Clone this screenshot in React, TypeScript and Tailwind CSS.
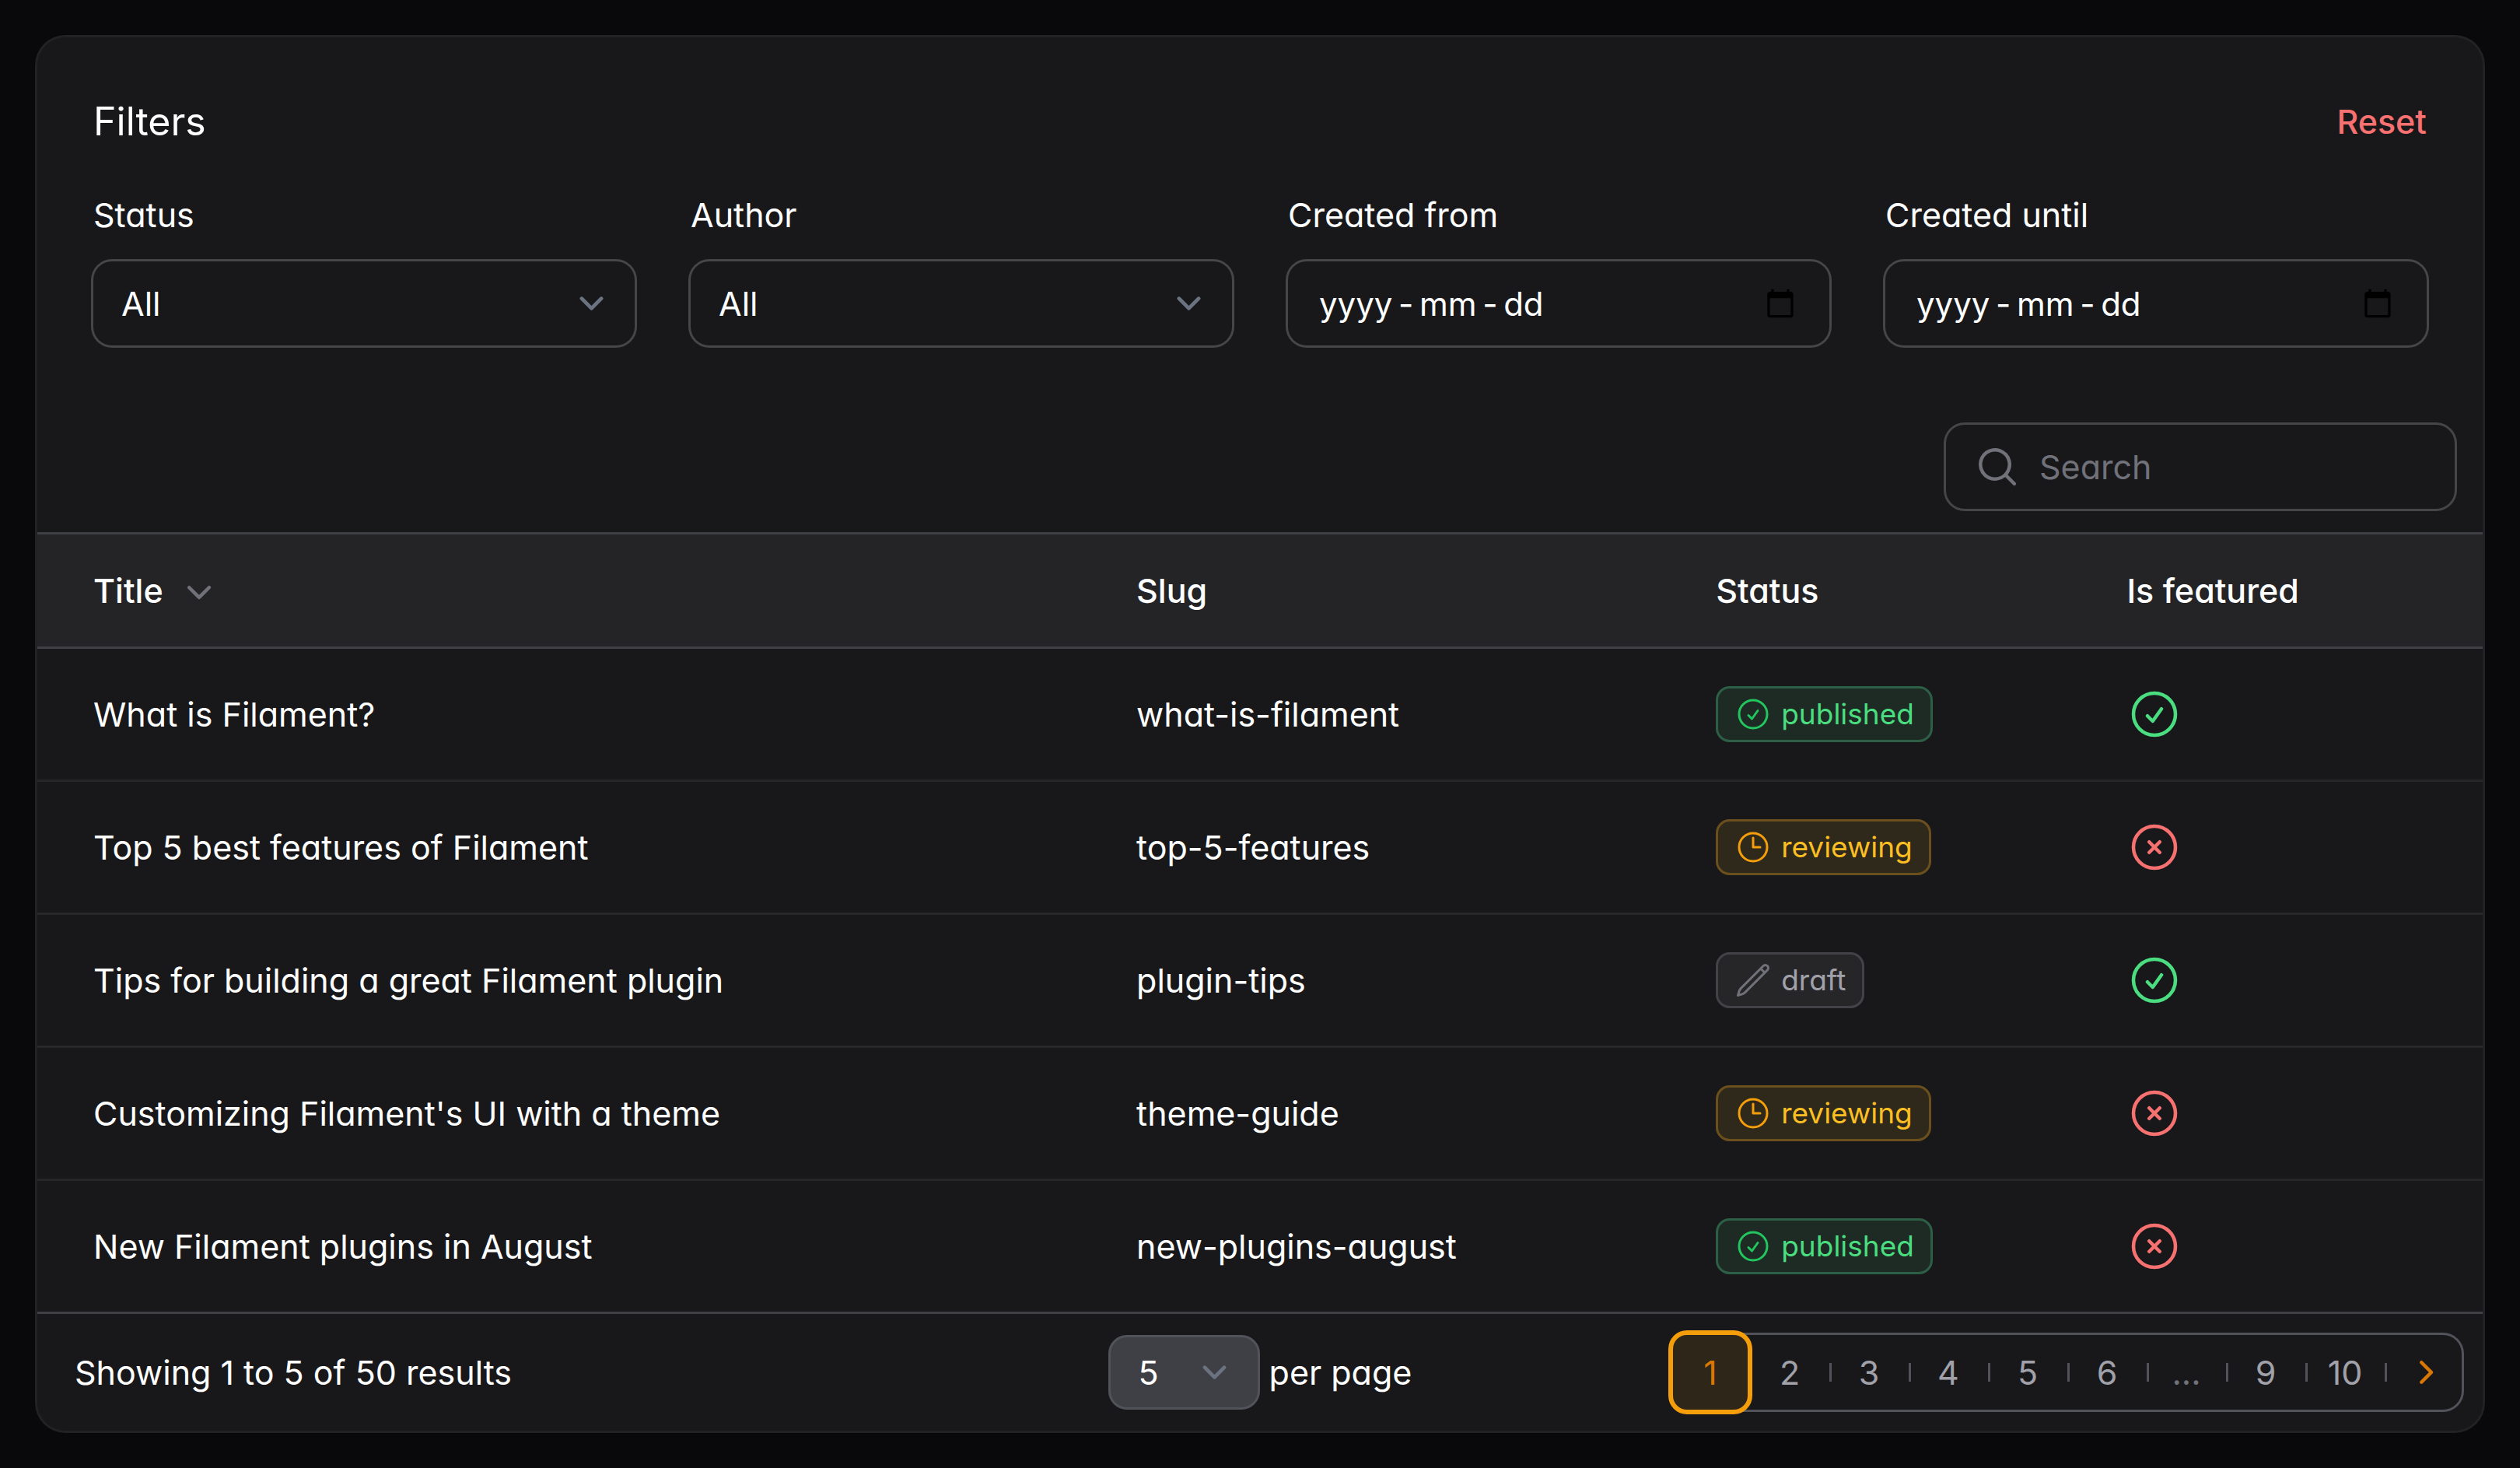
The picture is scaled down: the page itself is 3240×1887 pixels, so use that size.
import {
  HiMiniChevronDown,
  HiMiniChevronRight,
  HiMiniMagnifyingGlass,
  HiOutlineCheckCircle,
  HiOutlineClock,
  HiOutlinePencil,
  HiOutlineXCircle,
} from "react-icons/hi2";
import type { ReactNode } from "react";

type Status = "published" | "reviewing" | "draft";

const posts: { title: string; slug: string; status: Status; featured: boolean }[] = [
  { title: "What is Filament?", slug: "what-is-filament", status: "published", featured: true },
  { title: "Top 5 best features of Filament", slug: "top-5-features", status: "reviewing", featured: false },
  { title: "Tips for building a great Filament plugin", slug: "plugin-tips", status: "draft", featured: true },
  { title: "Customizing Filament's UI with a theme", slug: "theme-guide", status: "reviewing", featured: false },
  { title: "New Filament plugins in August", slug: "new-plugins-august", status: "published", featured: false },
];

const badgeStyles: Record<Status, { box: string; icon: string; Icon: typeof HiOutlineClock }> = {
  published: {
    box: "bg-[#1e2a24] text-[#4ade80] ring-[#2d5f47]",
    icon: "text-[#22c55e]",
    Icon: HiOutlineCheckCircle,
  },
  reviewing: {
    box: "bg-[#2f291b] text-[#fbbf24] ring-[#6b4f1d]",
    icon: "text-[#f59e0b]",
    Icon: HiOutlineClock,
  },
  draft: {
    box: "bg-[#262629] text-[#a1a1aa] ring-[#434347]",
    icon: "text-[#71717a]",
    Icon: HiOutlinePencil,
  },
};

function SelectChevron() {
  return (
    <svg
      viewBox="0 0 20 20"
      fill="none"
      aria-hidden="true"
      className="pointer-events-none absolute right-6 top-1/2 size-[63px] -translate-y-1/2 stroke-[#6b7280]"
    >
      <path d="M6 8l4 4 4-4" strokeWidth="1.5" strokeLinecap="round" strokeLinejoin="round" />
    </svg>
  );
}

function CalendarIcon() {
  return (
    <svg viewBox="0 0 24 24" fill="currentColor" aria-hidden="true" className="size-10">
      <path d="M20 3h-1V1h-2v2H7V1H5v2H4c-1.1 0-2 .9-2 2v16c0 1.1.9 2 2 2h16c1.1 0 2-.9 2-2V5c0-1.1-.9-2-2-2zm0 18H4V8h16v13z" />
    </svg>
  );
}

function Field({ id, label, children }: { id: string; label: string; children: ReactNode }) {
  return (
    <div className="flex min-w-0 flex-col gap-6">
      <label htmlFor={id} className="leading-[72px]">
        {label}
      </label>
      <div className="relative flex h-[108px] items-center rounded-[24px] ring-[3px] ring-[#464649]">{children}</div>
    </div>
  );
}

function SelectField({ id, label }: { id: string; label: string }) {
  return (
    <Field id={id} label={label}>
      <select id={id} className="size-full appearance-none bg-transparent pl-9 pr-24 outline-none">
        <option>All</option>
      </select>
      <SelectChevron />
    </Field>
  );
}

function DateField({ id, label }: { id: string; label: string }) {
  return (
    <Field id={id} label={label}>
      <input
        id={id}
        type="text"
        placeholder={"yyyy\u2009-\u2009mm\u2009-\u2009dd"}
        className="h-full min-w-0 flex-1 bg-transparent pl-10 text-[42px] outline-none placeholder:text-white"
      />
      <button type="button" aria-label={`Open calendar for ${label}`} className="mr-[43px] text-black">
        <CalendarIcon />
      </button>
    </Field>
  );
}

function Badge({ status }: { status: Status }) {
  const { box, icon, Icon } = badgeStyles[status];
  return (
    <span className={`inline-flex items-center gap-3 rounded-[18px] px-6 py-3 align-middle text-[37px] leading-[48px] ring-[3px] ring-inset ${box}`}>
      <Icon className={`size-12 ${icon}`} />
      {status}
    </span>
  );
}

function Pagination() {
  const pages = ["2", "3", "4", "5", "6", "…", "9", "10"];
  return (
    <nav aria-label="Pagination" className="justify-self-end">
      <ul className="flex items-center gap-[3px] rounded-[24px] text-[#a1a1aa] ring-[3px] ring-[#52525b]">
        <li>
          <button
            type="button"
            aria-current="page"
            className="block size-24 rounded-[18px] bg-[#2f261a] text-[#d97706] ring-[6px] ring-[#f59e0b]"
          >
            1
          </button>
        </li>
        {pages.map((page, i) => (
          <li key={page} className="flex items-center">
            <span className={`h-6 w-[3px] ${i === 0 ? "" : "bg-[#52525b]"}`} />
            <button type="button" disabled={page === "…"} className="size-24 disabled:text-[#71717a]">
              {page === "…" ? "..." : page}
            </button>
          </li>
        ))}
        <li className="flex items-center">
          <span className="h-6 w-[3px] bg-[#52525b]" />
          <button type="button" aria-label="Next page" className="flex size-24 items-center justify-center text-[#d97706]">
            <HiMiniChevronRight className="size-[60px]" />
          </button>
        </li>
      </ul>
    </nav>
  );
}

export default function App() {
  return (
    <div className="min-h-screen bg-[#09090b] p-12 font-['Inter',sans-serif] text-[43px] leading-[60px] text-white [font-feature-settings:'cv11']">
      <main className="overflow-hidden rounded-[36px] bg-[#18181b] shadow-sm ring-[3px] ring-[#222225]">
        <section className="p-[72px]">
          <div className="flex items-center justify-between">
            <h2 className="text-[50px] leading-[72px]">Filters</h2>
            <button type="button" className="font-medium text-[#f87171]">
              Reset
            </button>
          </div>
          <div className="mt-12 grid grid-cols-4 gap-[72px]">
            <SelectField id="filter-status" label="Status" />
            <SelectField id="filter-author" label="Author" />
            <DateField id="filter-from" label="Created from" />
            <DateField id="filter-until" label="Created until" />
          </div>
        </section>

        <div className="flex justify-end px-9 py-[30px]">
          <label className="flex h-[108px] w-[654px] items-center gap-6 rounded-[24px] px-9 ring-[3px] ring-[#464649]">
            <HiMiniMagnifyingGlass className="size-[60px] shrink-0 text-[#71717a]" />
            <input
              type="search"
              aria-label="Search"
              placeholder="Search"
              className="h-full min-w-0 flex-1 bg-transparent outline-none placeholder:text-[#71717a]"
            />
          </label>
        </div>

        <table className="w-full table-fixed border-collapse text-left">
          <thead>
            <tr className="h-[147px] border-y-[3px] border-[#3f3f46] bg-[#242427]">
              <th scope="col" className="w-[43.8%] py-0 pl-[72px] font-medium">
                <button type="button" className="flex items-center gap-4">
                  Title
                  <HiMiniChevronDown className="size-[60px] text-[#71717a]" />
                </button>
              </th>
              <th scope="col" className="w-[23.7%] px-9 font-medium">Slug</th>
              <th scope="col" className="w-[16.8%] px-9 font-medium">Status</th>
              <th scope="col" className="px-9 font-medium">Is featured</th>
            </tr>
          </thead>
          <tbody>
            {posts.map((post) => (
              <tr key={post.slug} className="h-[171px] border-b-[3px] border-[#27272a] last:border-[#3f3f46]">
                <td className="pl-[72px]">{post.title}</td>
                <td className="px-9">{post.slug}</td>
                <td className="px-9">
                  <Badge status={post.status} />
                </td>
                <td className="px-9">
                  {post.featured ? (
                    <HiOutlineCheckCircle title="Yes" className="size-[72px] text-[#4ade80]" />
                  ) : (
                    <HiOutlineXCircle title="No" className="size-[72px] text-[#f87171]" />
                  )}
                </td>
              </tr>
            ))}
          </tbody>
        </table>

        <footer className="grid h-[150px] grid-cols-[1fr_auto_1fr] items-center px-[27px]">
          <p className="pl-[21px]">Showing 1 to 5 of 50 results</p>
          <label className="flex items-center gap-3">
            <span className="relative flex rounded-[24px] border-[3px] border-[#52525b] bg-[#3f3f46]">
              <select className="block h-[90px] w-[189px] appearance-none bg-transparent pl-9 outline-none">
                <option>5</option>
              </select>
              <SelectChevron />
            </span>
            per page
          </label>
          <Pagination />
        </footer>
      </main>
    </div>
  );
}
